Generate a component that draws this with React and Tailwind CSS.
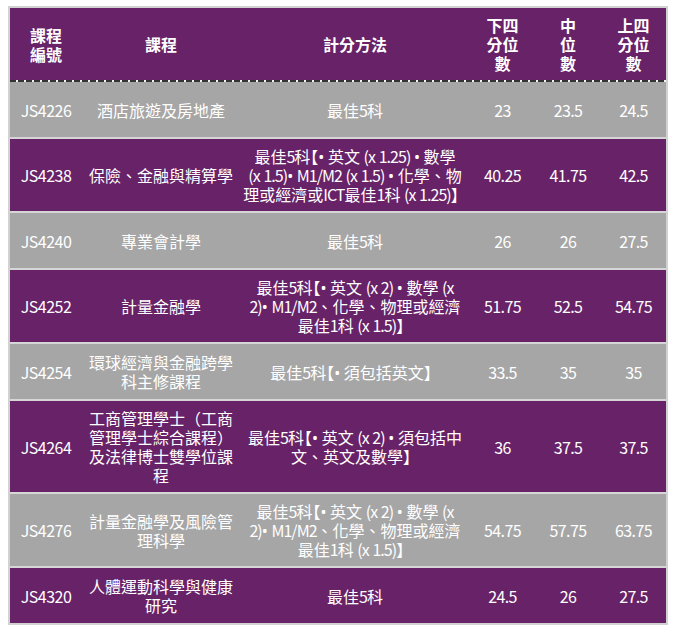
const rows = [
    { code: "JS4226", name: "酒店旅遊及房地產", method: ["最佳5科"], q1: "23", med: "23.5", q3: "24.5" },
    {
        code: "JS4238",
        name: "保險、金融與精算學",
        method: ["最佳5科【• 英文 (x 1.25) • 數學", "(x 1.5)• M1/M2 (x 1.5) • 化學、物", "理或經濟或ICT最佳1科 (x 1.25)】"],
        q1: "40.25", med: "41.75", q3: "42.5",
    },
    { code: "JS4240", name: "專業會計學", method: ["最佳5科"], q1: "26", med: "26", q3: "27.5" },
    {
        code: "JS4252",
        name: "計量金融學",
        method: ["最佳5科【• 英文 (x 2) • 數學 (x", "2)• M1/M2、化學、物理或經濟", "最佳1科 (x 1.5)】"],
        q1: "51.75", med: "52.5", q3: "54.75",
    },
    { code: "JS4254", name: "環球經濟與金融跨學科主修課程", method: ["最佳5科【• 須包括英文】"], q1: "33.5", med: "35", q3: "35" },
    {
        code: "JS4264",
        name: "工商管理學士（工商管理學士綜合課程）及法律博士雙學位課程",
        method: ["最佳5科【• 英文 (x 2) • 須包括中", "文、英文及數學】"],
        q1: "36", med: "37.5", q3: "37.5",
    },
    {
        code: "JS4276",
        name: "計量金融學及風險管理科學",
        method: ["最佳5科【• 英文 (x 2) • 數學 (x", "2)• M1/M2、化學、物理或經濟", "最佳1科 (x 1.5)】"],
        q1: "54.75", med: "57.75", q3: "63.75",
    },
    { code: "JS4320", name: "人體運動科學與健康研究", method: ["最佳5科"], q1: "24.5", med: "26", q3: "27.5" },
];

const cell = "flex items-center justify-center text-center px-[7px] pt-[8px] pb-[7px]";
const grid = "grid grid-cols-[72px_158px_230px_65px_66px_65px] min-h-[55px]";
const CJK = /([\u3000-\u9fff\uff00-\uffef【】、]+)/;

// 西文段：空格保持原寬，其餘字母數字收窄，圓點用西文字體
function Latin({ text }) {
    return text.split(/( |•)/).filter(Boolean).map((s, m) => {
        if (s === " ") return <span key={m}> </span>;
        if (s === "•") return <span key={m} className="font-['Noto_Sans',sans-serif] leading-none">•</span>;
        return <span key={m} className="tracking-[-0.06em]">{s}</span>;
    });
}

function MethodLine({ text }) {
    const parts = text.split(CJK).filter(Boolean);
    return (
        <div className="h-[19px] whitespace-pre">
            {parts.map((p, k) => {
                if (!/^[\u3000-\u9fff\uff00-\uffef【】、]/.test(p)) return <Latin key={k} text={p} />;
                const [head, ...rest] = p.split("【");
                return (
                    <span key={k}>
                        {head}
                        {rest.map((r, m) => (
                            <span key={m}>
                                <span className="[font-feature-settings:'halt']">【</span>
                                {r}
                            </span>
                        ))}
                    </span>
                );
            })}
        </div>
    );
}

export default function App() {
    return (
        <div className="pl-[8px] pt-[6px] bg-white font-['Noto_Sans_CJK_TC','Liberation_Sans',sans-serif] text-[16px] leading-[19px] text-white">
            <div className="w-[660px] border-2 border-[#d2d2d2] bg-[#d6d6d6]">
                {/* 表頭 */}
                <div className={`${grid} bg-[#682268] font-bold`}>
                    <div className={cell}>課程<br />編號</div>
                    <div className={cell}>課程</div>
                    <div className={cell}>計分方法</div>
                    <div className={cell}>下四<br />分位<br />數</div>
                    <div className={cell}>中<br />位<br />數</div>
                    <div className={cell}>上四<br />分位<br />數</div>
                </div>
                <div className="h-[2px] bg-[repeating-linear-gradient(90deg,#333_0_6px,#f2f2f2_6px_8px)]" />

                {/* 資料列 */}
                <div className="flex flex-col gap-[2px]">
                    {rows.map((r, i) => (
                        <div key={r.code} className={`${grid} ${i % 2 === 0 ? "bg-[#a6a6a6]" : "bg-[#682268]"}`}>
                            <div className={`${cell} tracking-[-0.03em]`}>{r.code}</div>
                            <div className={cell}>{r.name}</div>
                            <div className={cell}>
                                <div>
                                    {r.method.map((line, j) => (
                                        <MethodLine key={j} text={line} />
                                    ))}
                                </div>
                            </div>
                            <div className={`${cell} tracking-[-0.04em]`}>{r.q1}</div>
                            <div className={`${cell} tracking-[-0.04em]`}>{r.med}</div>
                            <div className={`${cell} tracking-[-0.04em]`}>{r.q3}</div>
                        </div>
                    ))}
                </div>
            </div>
        </div>
    );
}
